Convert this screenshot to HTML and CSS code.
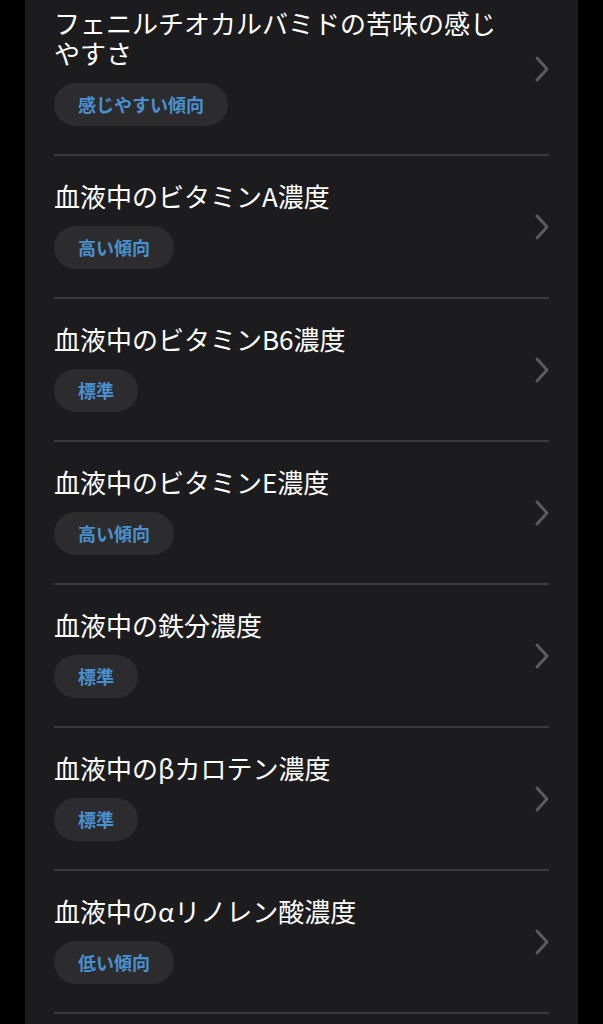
FILE: index.html
```html
<!DOCTYPE html>
<html lang="ja">
<head>
    <meta charset="UTF-8">
    <meta name="viewport" content="width=device-width, initial-scale=1.0">
    <title>遺伝子検査結果</title>
    <link rel="stylesheet" href="styles.css">
</head>
<body>
    <div class="panel">
        <ul class="result-list">
            <li class="result-item">
                <div class="result-body">
                    <div class="result-title">フェニルチオカルバミドの苦味の感じやすさ</div>
                    <span class="badge">感じやすい傾向</span>
                </div>
                <svg class="chevron" viewBox="0 0 16 28"><polyline points="3,3 13,14 3,25"/></svg>
            </li>
            <li class="result-item">
                <div class="result-body">
                    <div class="result-title">血液中のビタミンA濃度</div>
                    <span class="badge">高い傾向</span>
                </div>
                <svg class="chevron" viewBox="0 0 16 28"><polyline points="3,3 13,14 3,25"/></svg>
            </li>
            <li class="result-item">
                <div class="result-body">
                    <div class="result-title">血液中のビタミンB6濃度</div>
                    <span class="badge">標準</span>
                </div>
                <svg class="chevron" viewBox="0 0 16 28"><polyline points="3,3 13,14 3,25"/></svg>
            </li>
            <li class="result-item">
                <div class="result-body">
                    <div class="result-title">血液中のビタミンE濃度</div>
                    <span class="badge">高い傾向</span>
                </div>
                <svg class="chevron" viewBox="0 0 16 28"><polyline points="3,3 13,14 3,25"/></svg>
            </li>
            <li class="result-item">
                <div class="result-body">
                    <div class="result-title">血液中の鉄分濃度</div>
                    <span class="badge">標準</span>
                </div>
                <svg class="chevron" viewBox="0 0 16 28"><polyline points="3,3 13,14 3,25"/></svg>
            </li>
            <li class="result-item">
                <div class="result-body">
                    <div class="result-title">血液中のβカロテン濃度</div>
                    <span class="badge">標準</span>
                </div>
                <svg class="chevron" viewBox="0 0 16 28"><polyline points="3,3 13,14 3,25"/></svg>
            </li>
            <li class="result-item">
                <div class="result-body">
                    <div class="result-title">血液中のαリノレン酸濃度</div>
                    <span class="badge">低い傾向</span>
                </div>
                <svg class="chevron" viewBox="0 0 16 28"><polyline points="3,3 13,14 3,25"/></svg>
            </li>
        </ul>
    </div>
</body>
</html>
```

FILE: styles.css
```css
html, body {
    margin: 0;
    padding: 0;
    background: #000;
    height: 100%;
    overflow: hidden;
}
body {
    font-family: "Noto Sans CJK JP", "Noto Sans", sans-serif;
    color: #fff;
}
.panel {
    margin: 0 25px;
    min-height: calc(100vh + 20px);
    background: #1c1c1e;
    padding: 0 29px;
}
.result-list {
    list-style: none;
    margin: -17px 0 0;
    padding: 0;
}
.result-item {
    display: flex;
    align-items: center;
    padding: 25px 0 28px;
    border-bottom: 2px solid #3a3a3c;
}
.result-body {
    flex: 1;
    min-width: 0;
    padding-right: 30px;
}
.result-title {
    font-size: 26px;
    line-height: 30px;
    margin-bottom: 15px;
}
.badge {
    display: inline-block;
    height: 43px;
    line-height: 43px;
    padding: 0 24px;
    border-radius: 22px;
    background: #2c2c2e;
    color: #4a90cf;
    font-size: 18px;
    font-weight: bold;
}
.chevron {
    width: 16px;
    height: 28px;
    flex-shrink: 0;
    margin-right: -1px;
    margin-top: 4px;
}
.chevron polyline {
    fill: none;
    stroke: #5b5b5f;
    stroke-width: 3;
    stroke-linecap: round;
    stroke-linejoin: round;
}
```
